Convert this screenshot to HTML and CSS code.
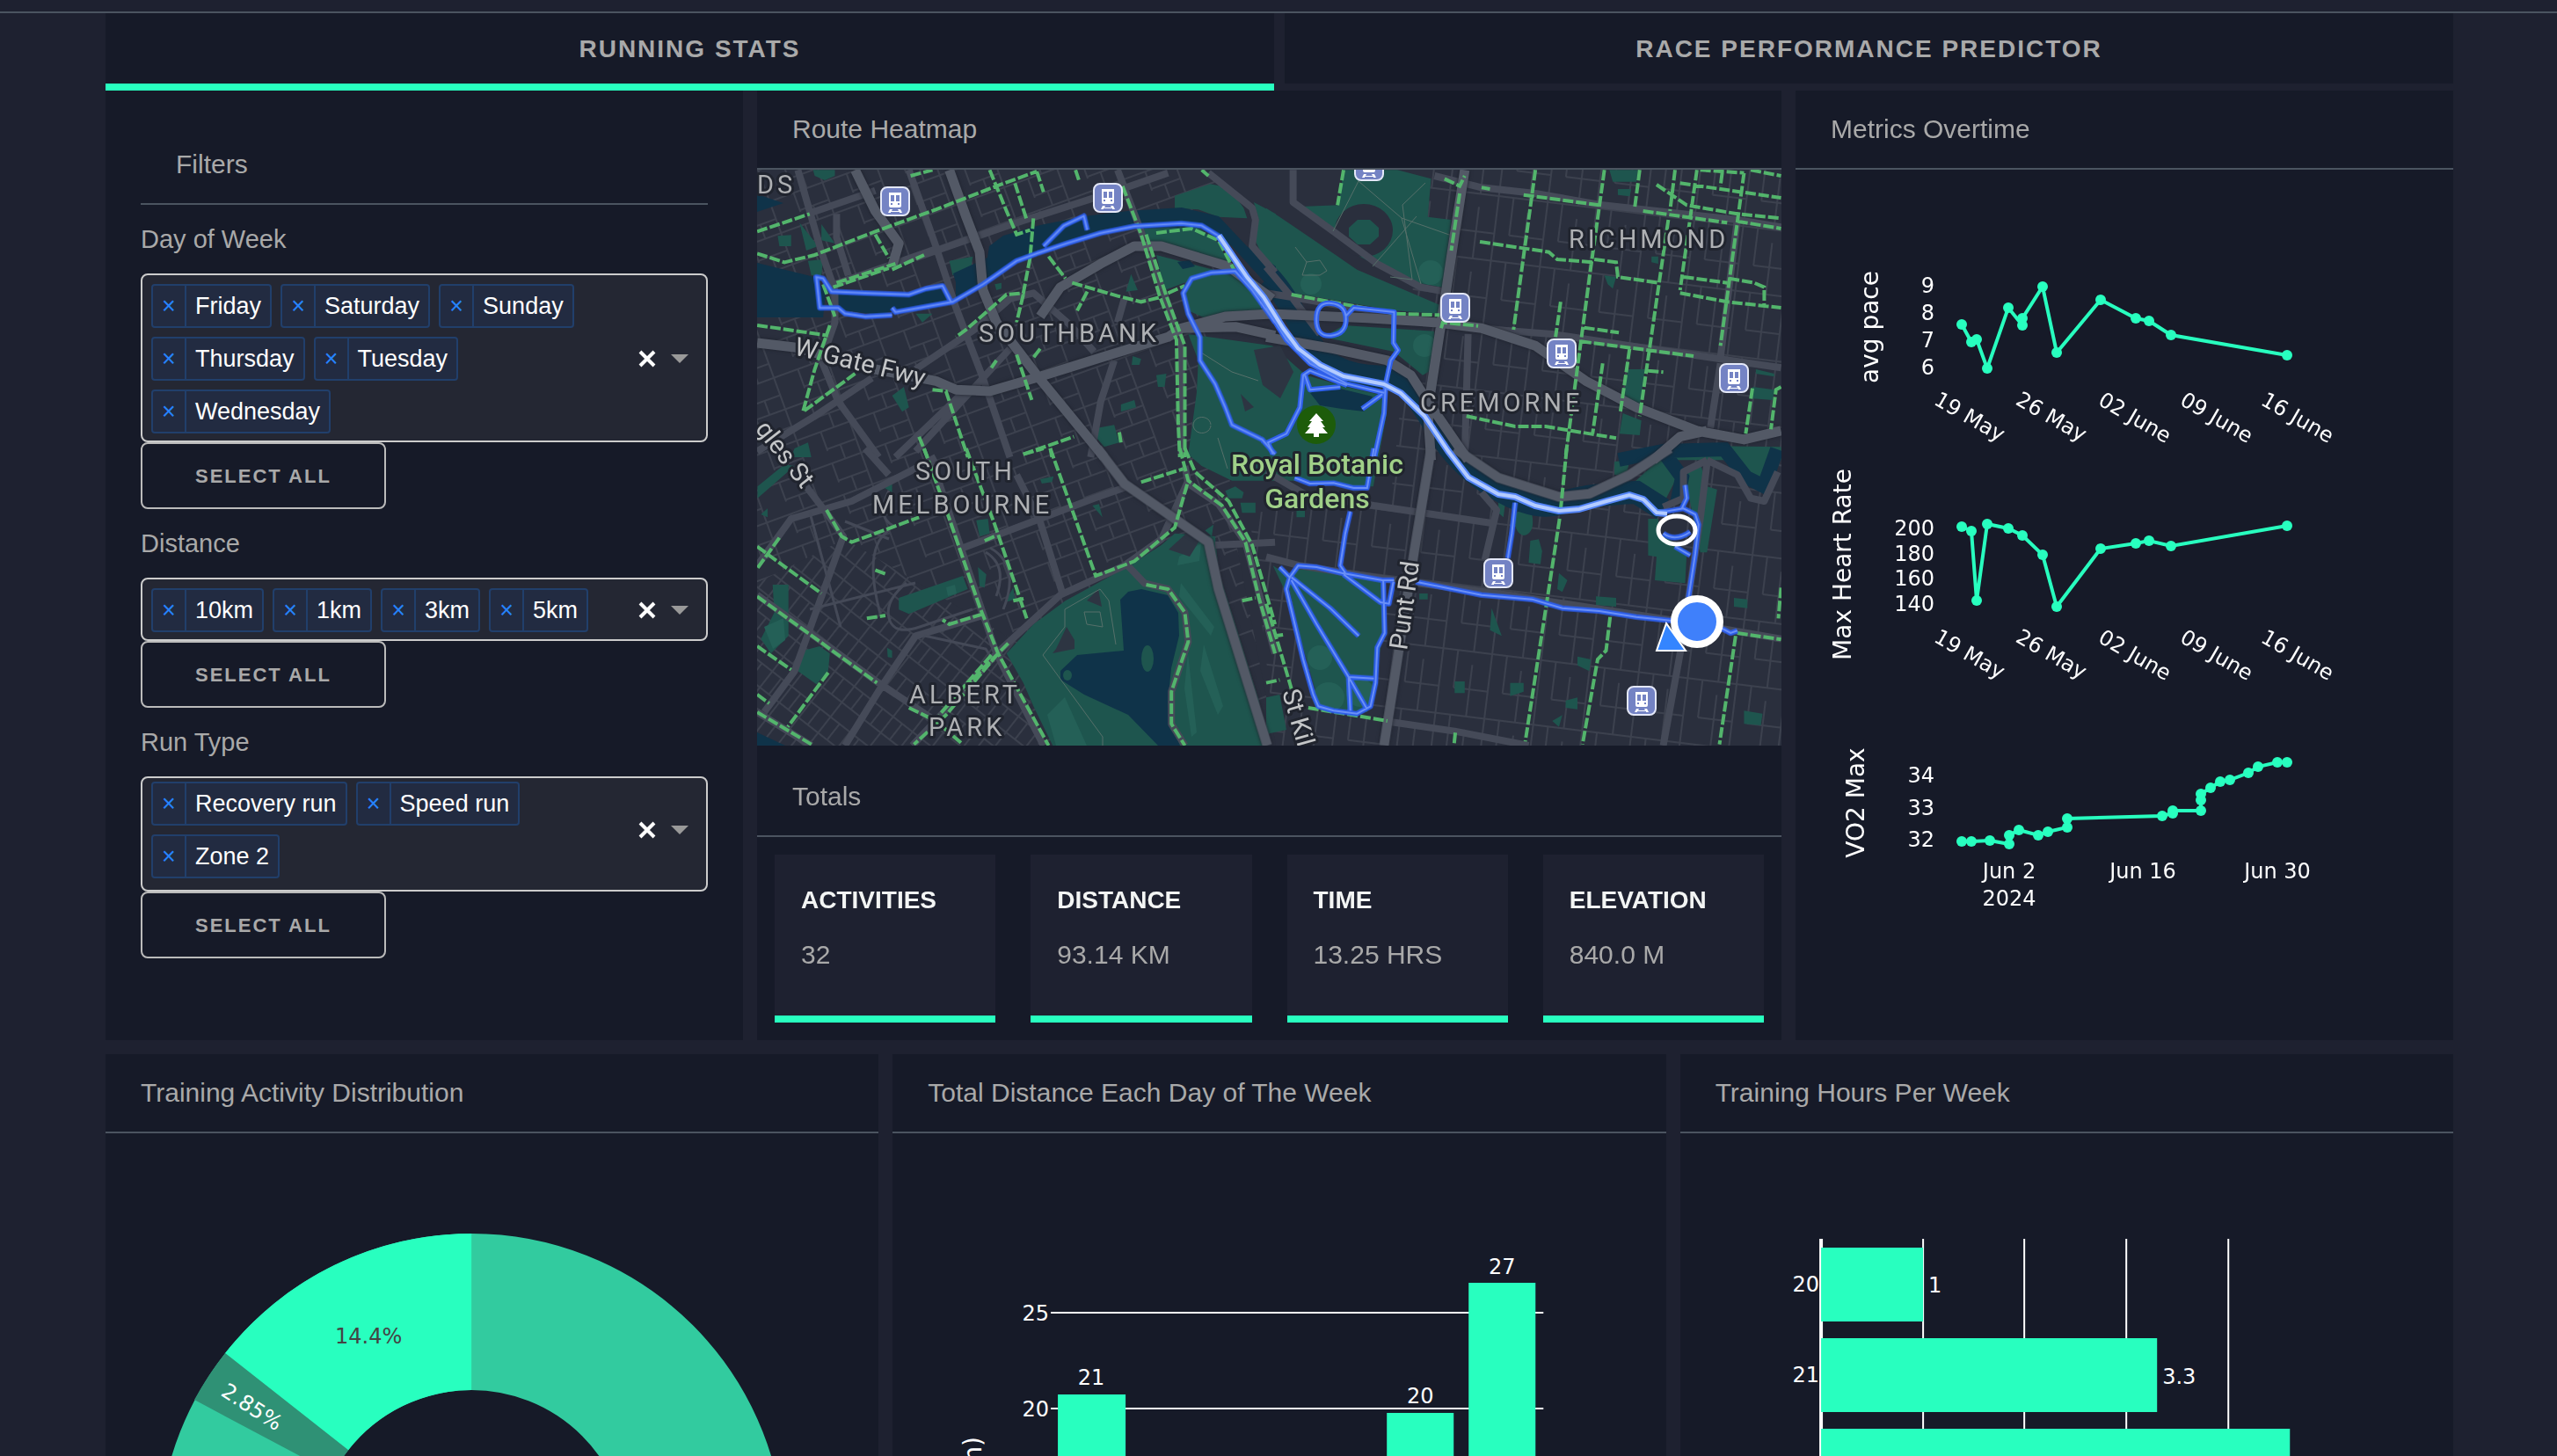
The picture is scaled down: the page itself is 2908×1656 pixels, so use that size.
FILE: index.html
```html
<!DOCTYPE html>
<html lang="en">
<head>
  <meta charset="UTF-8">
  <meta name="viewport" content="width=device-width, initial-scale=1.0">
  <title>Running Dashboard</title>
  <link rel="stylesheet" href="styles.css">
</head>
<body>
  <header class="banner"></header>
  <main class="app">
    <!-- Tabs -->
    <div class="tabs" role="tablist">
      <button class="tab tab-selected" role="tab" aria-selected="true">RUNNING STATS</button>
      <button class="tab" role="tab" aria-selected="false">RACE PERFORMANCE PREDICTOR</button>
    </div>

    <div class="top-row">
      <!-- Filters -->
      <section class="panel filters">
        <h2 class="section-header">Filters</h2>

        <label class="filter-label" for="day-toggle">Day of Week</label>
        <div class="select">
          <div class="chips">
            <span class="chip"><button class="chip-x" aria-label="Remove Friday">×</button><span class="chip-text">Friday</span></span>
            <span class="chip"><button class="chip-x" aria-label="Remove Saturday">×</button><span class="chip-text">Saturday</span></span>
            <span class="chip"><button class="chip-x" aria-label="Remove Sunday">×</button><span class="chip-text">Sunday</span></span>
            <span class="chip"><button class="chip-x" aria-label="Remove Thursday">×</button><span class="chip-text">Thursday</span></span>
            <span class="chip"><button class="chip-x" aria-label="Remove Tuesday">×</button><span class="chip-text">Tuesday</span></span>
            <span class="chip"><button class="chip-x" aria-label="Remove Wednesday">×</button><span class="chip-text">Wednesday</span></span>
          </div>
          <button class="select-clear" aria-label="Clear days">
            <svg width="20" height="20" viewBox="0 0 20 20"><path d="M2 2L18 18M18 2L2 18"/></svg>
          </button>
          <button class="select-toggle" id="day-toggle" aria-label="Open day list">
            <svg width="20" height="10" viewBox="0 0 20 10"><path d="M0 0H20L10 10Z"/></svg>
          </button>
        </div>
        <button class="select-all">SELECT ALL</button>

        <label class="filter-label" for="distance-toggle">Distance</label>
        <div class="select">
          <div class="chips">
            <span class="chip"><button class="chip-x" aria-label="Remove 10km">×</button><span class="chip-text">10km</span></span>
            <span class="chip"><button class="chip-x" aria-label="Remove 1km">×</button><span class="chip-text">1km</span></span>
            <span class="chip"><button class="chip-x" aria-label="Remove 3km">×</button><span class="chip-text">3km</span></span>
            <span class="chip"><button class="chip-x" aria-label="Remove 5km">×</button><span class="chip-text">5km</span></span>
          </div>
          <button class="select-clear" aria-label="Clear distances">
            <svg width="20" height="20" viewBox="0 0 20 20"><path d="M2 2L18 18M18 2L2 18"/></svg>
          </button>
          <button class="select-toggle" id="distance-toggle" aria-label="Open distance list">
            <svg width="20" height="10" viewBox="0 0 20 10"><path d="M0 0H20L10 10Z"/></svg>
          </button>
        </div>
        <button class="select-all">SELECT ALL</button>

        <label class="filter-label" for="type-toggle">Run Type</label>
        <div class="select select-scrolled">
          <div class="chips">
            <span class="chip"><button class="chip-x" aria-label="Remove Recovery run">×</button><span class="chip-text">Recovery run</span></span>
            <span class="chip"><button class="chip-x" aria-label="Remove Speed run">×</button><span class="chip-text">Speed run</span></span>
            <span class="chip"><button class="chip-x" aria-label="Remove Zone 2">×</button><span class="chip-text">Zone 2</span></span>
          </div>
          <button class="select-clear" aria-label="Clear run types">
            <svg width="20" height="20" viewBox="0 0 20 20"><path d="M2 2L18 18M18 2L2 18"/></svg>
          </button>
          <button class="select-toggle" id="type-toggle" aria-label="Open run type list">
            <svg width="20" height="10" viewBox="0 0 20 10"><path d="M0 0H20L10 10Z"/></svg>
          </button>
        </div>
        <button class="select-all">SELECT ALL</button>
      </section>

      <!-- Map and totals -->
      <section class="panel">
        <h2 class="section-header">Route Heatmap</h2>
        <svg class="map" viewBox="0 0 1165 655" role="img" aria-label="Route heatmap">
          <defs>
            <pattern id="grid-west" width="64" height="38" patternUnits="userSpaceOnUse" patternTransform="rotate(-20)">
              <path class="minor" d="M0 1H64M1 0V38M30 0V24M30 22H64M46 22V38"/>
            </pattern>
            <pattern id="grid-park" width="44" height="28" patternUnits="userSpaceOnUse" patternTransform="rotate(-52)">
              <path class="minor" d="M0 1H44M1 0V28M22 14H44M22 0V28"/>
            </pattern>
            <pattern id="grid-east" width="56" height="74" patternUnits="userSpaceOnUse" patternTransform="rotate(7)">
              <path class="minor" d="M0 1H56M1 0V74M18 0V44M36 16V74M18 44H56"/>
            </pattern>
            <symbol id="train" viewBox="0 0 34 34">
              <rect x="1" y="1" width="32" height="32" rx="7" fill="#7483c4" stroke="#e4e8f8" stroke-width="2"/>
              <path fill="#fff" d="M10 7H24V22Q24 24 22 24H12Q10 24 10 22ZM11 26H14L13 28H21L20 26H23L25 30H22V29H12V30H9Z"/>
              <path fill="#7483c4" d="M12 10H16V17H12ZM18 10H22V17H18ZM12 19H14V21H12ZM20 19H22V21H20Z"/>
            </symbol>
          </defs>
          <rect width="1165" height="655" fill="#2a2f3d"/>
          <rect width="700" height="655" fill="url(#grid-west)"/>
          <path d="M0 470L100 420 300 540 320 655H0Z" fill="#2a2f3d"/>
          <path d="M0 470L100 420 300 540 320 655H0Z" fill="url(#grid-park)"/>
          <path d="M520 0H1165V655H590L540 400Z" fill="#2a2f3d"/>
          <path d="M760 0H1165V655H590L560 390 720 380Z" fill="url(#grid-east)"/>

          <!-- parks -->
          <g class="park">
            <g transform="matrix(.3827 0 0 .3333 -11 -13)">
              <path d="M1270 128L1375 88 1430 100 1475 170 1485 205 1400 200 1340 175 1270 170ZM1505 150L1570 190V370L1530 330 1500 260 1520 210ZM1170 240L1340 235 1400 290 1440 380 1390 370 1280 320 1200 290ZM1215 330L1400 385 1310 420 1240 450ZM1300 430L1390 390 1450 400 1560 520 1360 545 1310 520Z"/>
              <path d="M1310 600L1560 640 1660 740 1780 780 1890 810 1900 870 1860 1120 1760 1120 1640 1100 1440 1100 1350 1050 1310 1010 1335 800 1340 690Z"/>
              <path d="M195 40H260V60L230 75 200 60ZM155 220L210 300 175 315ZM90 265L130 262V300H95ZM220 225L260 290 220 280ZM180 350L225 345 220 400 190 400ZM600 350L670 335 665 370 610 400ZM1140 395L1160 450 1125 455ZM430 810L465 780 480 850 460 865ZM1110 840L1150 825 1155 850 1110 865ZM1040 920L1090 910 1105 970 1060 985 1035 950ZM1215 740L1245 735 1240 780H1220ZM1145 675L1170 685 1165 705H1142ZM500 530H550L520 560ZM735 430L755 425 755 445 740 450ZM140 990L180 970 190 1020H130Z"/>
            </g>
            <g transform="matrix(.3827 0 0 .3333 579 -13)">
              <path d="M230 40H390L490 70 480 200 550 210 525 440 470 430 380 400 270 330 100 165 215 160ZM0 170L40 200 270 380 515 500 510 530 380 520 80 460 30 400 0 350ZM230 570L500 590 495 720 465 740 380 660 170 610Z"/>
              <path d="M1020 40H1105L1100 80 1030 80ZM1045 105L1085 105 1080 130 1045 125ZM1005 400L1040 405 1030 445 1015 430ZM1075 720L1125 720 1110 845 1060 830ZM1060 870L1115 895 1110 945 1050 940ZM1455 720L1510 735V745L1455 735ZM1445 780L1510 790 1505 825 1445 820ZM1145 335H1165V360L1145 355ZM1240 980L1530 985V1030H1200Z"/>
            </g>
            <g transform="matrix(.3827 0 0 .3333 -11 317)">
              <path d="M1270 290L1390 300 1400 420 1450 600 1520 860 1545 1020H910L850 880 820 800 770 700 850 600 945 520 1120 410 1230 330Z"/>
              <path d="M75 465H122V640L70 700 40 650 80 560ZM165 690L215 675 245 700 240 760 205 805 150 760ZM450 510L640 435 655 480 480 565 450 550ZM680 245L715 240 720 290 690 300ZM685 405L710 430 705 475 690 470ZM1025 195L1045 190 1055 235ZM765 525L790 475 795 515ZM870 105L910 95 905 115 875 120ZM400 130L430 120V150ZM40 225L60 205V235ZM30 130L110 55 140 60 30 170ZM415 680L430 690V715L417 712ZM1360 280L1385 260 1380 300ZM1420 145L1450 130 1475 150 1470 170H1430ZM1465 185H1510V220H1470Z"/>
            </g>
            <g transform="matrix(.3827 0 0 .3333 579 317)">
              <path d="M90 410L345 450 350 620 320 800 300 900 160 880 100 640 65 460ZM20 400L60 430 70 520ZM740 225Q765 190 790 225Q800 290 765 297Q735 290 740 225ZM690 175L710 190 705 235 690 220ZM785 315L810 310 820 350 815 395 780 390ZM870 425L895 450 880 490 865 480ZM670 545L700 640 665 620ZM980 505L1040 510V540L980 535ZM1135 240H1165L1170 290 1250 350 1245 460 1155 450 1160 370 1135 365ZM1240 70L1290 50 1310 130 1340 140 1310 355H1290Z"/>
              <path d="M925 710L965 720 960 760 925 740ZM725 800H765V830L725 845ZM560 795H590V835H560ZM890 860L925 850V890L890 885ZM850 930L880 910 870 950ZM1390 510L1430 515V545L1390 540ZM1420 895L1475 905 1470 945 1420 940ZM0 850L40 840 60 960 0 975ZM455 495H480V515H455ZM90 210H115V235H90ZM1080 130L1180 25 1220 100 1180 190 1140 160ZM1330 0H1530L1480 100 1440 120 1400 40ZM1035 45L1080 40 1070 95 1035 90Z"/>
            </g>
          </g>
          <g class="park-light">
            <circle cx="766" cy="117" r="14"/><circle cx="759" cy="200" r="13"/><circle cx="630" cy="130" r="12"/>
            <ellipse cx="650" cy="600" rx="18" ry="17"/><ellipse cx="686" cy="595" rx="16" ry="16"/><ellipse cx="640" cy="555" rx="14" ry="14"/>
            <path d="M330 620L350 600 375 655H340ZM480 440L505 425 503 445 478 450ZM482 470L520 520 516 530 480 485ZM508 540L530 610 524 620 504 570ZM490 550L500 640 494 645 486 590ZM215 475L225 472 227 482 217 485ZM8 520L30 510 32 535 18 545Z"/>
          </g>

          <!-- stadium and dark clearings -->
          <ellipse cx="690" cy="69" rx="33" ry="30" fill="#2a2f3d"/>
          <path class="park" d="M683 57H697L707 66V76L697 85H683L673 76V66Z"/>
          <path d="M565 205L595 200 610 230 595 260 575 245ZM550 255L565 270 555 275ZM340 545L352 520 361 535 361 545 336 550ZM468 432L490 412 503 422 492 440ZM375 490L388 477 392 497Z" fill="#2d3542"/>

          <!-- water -->
          <g class="water">
            <path d="M0 106L65 122 78 140 75 168 0 168ZM86 139L120 141 170 143 206 133 220 150 205 157 155 160 140 165 96 160ZM0 640L32 655H0ZM0 28L30 38 0 48Z"/>
            <path d="M226 128L223 118 262 100 264 87 280 75 322 63 372 53 422 47 483 43 525 53 557 87 590 110V142L540 87 502 65 430 67 372 75 318 97 287 110 226 150Z"/>
            <path d="M413 489L422 480 437 477 467 484 479 504 480 530 471 567 467 607 471 630 481 655H456L422 620 372 597 345 580V570L364 552 417 547Z"/>
            <path d="M629 254L650 246 700 258 690 275 665 272 640 268ZM478 105L492 103 498 110 484 113Z"/>
            <path class="river" d="M582 122Q600 140 625 190T720 235Q745 245 770 290T840 362T915 379T1000 367L1030 386"/>
            <path class="river thin" d="M980 330L1030 320 1052 350 1046 380M1030 320L1100 318 1125 350 1145 360 1160 318"/>
          </g>
          <ellipse class="park" cx="444" cy="556" rx="7" ry="15"/>
          <ellipse class="park" cx="353" cy="575" rx="5" ry="6"/>

          <!-- secondary roads -->
          <g class="road">
            <g transform="matrix(.3827 0 0 .3333 -11 -13)">
              <path d="M150 40L220 320 260 450V560L220 690 270 830 390 1020M480 40L560 300 620 510 700 750 780 1020M180 190L380 110M500 340L800 220 1100 110 1250 50M260 430L560 310M500 720L680 580 780 480 850 460 960 570 1030 660M29 1000L200 880 370 750M640 800L440 1020M1370 50L1500 170 1510 210 1500 300 1568 390M1090 690L1050 830 1020 1020M780 650L500 1000M1100 40L1170 250 1250 500 1290 650V1020M265 190L265 270 300 400M1100 560L1120 480"/>
            </g>
            <g transform="matrix(.3827 0 0 .3333 579 -13)">
              <path d="M0 370L80 480 160 600M80 40V150L200 250 330 360 460 440 530 455M500 60L640 100 800 120 1000 160 1400 210 1530 235M620 580L850 600 1140 650 1530 715M1350 700L1320 920M600 600L590 1020M1400 210L1350 680M0 460L80 475 520 560"/>
            </g>
            <g transform="matrix(.3827 0 0 .3333 -11 317)">
              <path d="M29 400L130 240 310 180 480 80 560 30M350 0L420 90M175 130L235 220 285 300 140 760 50 900M550 50L740 700 880 1014M640 340L870 240 1030 170 1130 130M800 90L870 250 935 490M740 700L930 500 1120 400 1230 310 1310 110M740 700L600 880 490 1014M700 570L500 640 400 810 290 1014M29 500L390 800 560 930M29 900L190 1014M1130 400L1180 460 1250 480 1300 560 1310 660 1260 830V940L1300 1014M1300 60L1310 120 1400 190 1480 320 1568 700M1390 330L1568 320"/>
            </g>
            <g transform="matrix(.3827 0 0 .3333 579 317)">
              <path d="M0 370L100 400 380 450 720 500 1000 550 1230 590 1530 650M350 930L560 965 780 1014M320 195L670 255M640 150L685 210 650 380M1310 50L1290 240 1230 700 1180 1014M1310 40L1400 90 1440 170 1480 180 1520 80M1180 200L1240 170V80L1310 40M0 80L120 160 320 195"/>
            </g>
          </g>
          <g class="street">
            <path d="M150 365Q135 395 155 405M170 470Q145 490 150 510T185 520L245 500M140 505Q120 430 150 410M260 435Q285 450 272 485M265 430Q300 450 280 500M60 390L95 520M190 530L260 545 270 560M60 500L180 470M100 400L150 420"/>
            <path class="trail" d="M684 13L655 70M684 13L733 55 790 75M760 15L734 40 745 125 720 122M733 55L755 130M750 53L700 110M612 88L625 105 640 103 648 115 640 120 620 120 625 105M350 500L390 477 400 490M350 500V520L325 552 393 645V655M372 503H390L393 520 375 517ZM400 490L408 540M506 290m10 0a10 9 0 1 0 0 1M524 305L535 340M505 208L540 230 570 240"/>
          </g>

          <!-- freeways -->
          <g class="freeway">
            <g transform="matrix(.3827 0 0 .3333 -11 -13)">
              <path d="M29 630L140 645 380 720 560 760 620 790 720 795 870 745 1050 680 1250 610 1290 580 1420 540 1568 530M1290 580L1450 575 1568 605M320 40L380 180 450 290 430 370M600 40L650 200 690 320 700 450 740 560 860 740 1060 1020M870 540L930 440 1050 360 1150 300 1230 300 1430 370 1560 480"/>
            </g>
            <g transform="matrix(.3827 0 0 .3333 579 -13)">
              <path d="M0 530L300 545 500 560 640 580 800 640 950 760 1100 850 1280 930 1420 960 1530 930M1150 1030L1230 950 1310 930M0 610L200 650 360 690 430 740 480 830 600 1030M590 40L560 260 535 450 515 600 480 860 490 1030"/>
            </g>
            <g transform="matrix(.3827 0 0 .3333 -11 317)">
              <path d="M1040 0L1120 120 1270 240 1370 320 1400 480 1545 1014"/>
            </g>
            <g transform="matrix(.3827 0 0 .3333 579 317)">
              <path d="M490 0L440 350 350 1014M560 0L690 100 870 165 960 155 1080 90 1200 0"/>
            </g>
          </g>

          <!-- bike paths -->
          <g class="bike">
            <g transform="matrix(.3827 0 0 .3333 -11 -13)">
              <path d="M29 325L110 355 200 330 380 250 560 175 740 95 860 45M29 250L185 190M720 40L770 180 800 260 840 245M850 205L840 340 820 460 770 465 650 585 620 610M820 465L800 560M255 440L420 375M430 380L525 330M265 425L440 360M380 260L420 340M485 60L550 40M795 85L830 210M860 45L880 115M975 40L985 75M1115 95L1170 260 1225 470 1275 620 1280 900 1285 1020M1185 260L1245 470 1300 640V1020M895 335L945 410M965 425L1100 470 1170 490 1225 475M1010 455L980 520M225 430L260 540M29 570L240 605M245 570L200 720 165 865 320 735M550 790L590 795 655 1020M800 670L845 825M740 690L725 715M870 650L850 680M510 950L535 1020M820 1010L970 950M900 990L905 1020M1105 935L1110 970M1215 255L1320 240 1400 280 1455 400M1250 460L1300 435M1350 40L1370 60"/>
            </g>
            <g transform="matrix(.3827 0 0 .3333 579 -13)">
              <path d="M800 40L735 585M1005 40L965 370 890 1015M1110 40L1095 170M1215 40L1200 180M1195 210L1110 880M1280 40L1230 450M1420 50L1350 640M575 120L550 315M530 70L575 95 590 60M640 100L665 105M765 125L990 160M1120 180L1370 220M1400 215L1530 240M1160 90L1250 160 1400 190 1530 205M1230 85L1530 135M1440 40L1530 60M1290 40L1420 50M1355 50L1350 95M635 285L840 320 865 345 970 355M975 345L1040 355 1045 405 1165 425M1240 405L1370 425M1375 410L1450 425 1480 440V500M1230 460L1370 490 1530 510M875 490L860 610M945 578L1048 595M935 625L1270 675M1080 650L1052 870M1000 700L970 940M1135 725L1180 730M595 880L740 915 830 915 1040 955M75 465L240 500 385 530 515 535M230 40L212 160M520 580L525 560 630 572M1445 785L1425 940M1530 780L1515 790 1500 925"/>
            </g>
            <g transform="matrix(.3827 0 0 .3333 -11 317)">
              <path d="M525 0L600 240 690 540 745 700 895 1014M650 0L735 260 830 580M900 0L1035 435 1150 385 1270 270 1310 110M1285 0L1310 110 1410 195 1480 320 1520 510 1568 700M1300 0L1330 80 1430 180 1500 330 1568 600M235 210L280 300 310 320 510 235M95 305L29 410M29 335L220 495M29 505L385 800M29 675L130 755M29 840L65 870M29 900L190 1010M240 765L120 950M480 885L560 930 640 1010M775 665L650 810M745 700L590 910 495 1010M725 705L570 910M700 565L600 600 580 585M1185 465L1250 480 1300 560 1310 660 1260 830V940L1300 1014M1170 115L1295 70M820 20L880 0M355 580L410 570M380 415L415 430M1470 520L1510 510M790 520L825 512M705 315L735 300"/>
            </g>
            <g transform="matrix(.3827 0 0 .3333 579 317)">
              <path d="M893 0L875 210M872 240L770 1000M1022 575L1010 690 985 720 940 1010M1395 640L1347 1010M1400 630L1530 652M1530 475L1522 580M125 885L360 930M562 970L558 1014M0 530L75 820M25 640L50 636M0 800L40 790"/>
            </g>
          </g>

          <!-- recorded runs -->
          <g class="run">
            <g transform="matrix(.3827 0 0 .3333 -11 -13)">
              <path id="run-nw" d="M430 535L350 540 290 530 270 510H215L205 405 225 410 250 455 350 460 480 465 530 445 580 435 605 490M430 510L440 525 610 490 700 430 800 350 860 325 950 290 1050 255 1150 232 1290 222 1350 230 1400 265 1440 330 1480 410M880 300L940 230 1000 197 1010 245M1568 560L1500 450 1450 385 1380 390 1320 410 1295 460 1310 530 1345 610V690L1390 770 1420 850 1440 910 1530 960 1568 1010"/>
            </g>
            <g transform="matrix(.3827 0 0 .3333 579 -13)">
              <path id="run-ne" d="M0 510L60 620 130 700 240 770 350 800M193 495Q237 500 237 550T193 605 149 550 193 495M235 540L260 510 380 525 378 630 392 655 370 690 355 770 350 870 320 1030M20 1010L5 970 60 940 100 850 110 740 130 725 240 775M115 740L130 790 220 780M285 855L345 805"/>
            </g>
            <g transform="matrix(.3827 0 0 .3333 579 317)">
              <path id="run-se" d="M1245 125L1250 170 1235 205M1160 220L1240 205 1275 225 1285 260 1275 360 1255 510M740 185L730 290 718 375M85 100L130 120 200 118 260 135 300 135 320 0M250 215L235 290 220 400 235 425M230 430L340 525 365 530 378 455M40 405L70 440 95 400 150 405 225 425 345 450 380 450M70 440L60 480 85 600 110 720 140 840 155 880 200 895 270 905 310 880 325 800 330 680 352 630 348 450M75 440L190 545 275 640M75 450L150 600 245 780 300 890M245 780L320 785M245 780L250 895M445 455L530 475 640 500 790 515 880 545 990 555 1100 575 1205 588M1355 615L1380 630 1400 622M1215 335L1260 365M1180 290Q1215 320 1260 285"/>
            </g>
          </g>
          <g class="run-core">
            <g transform="matrix(.3827 0 0 .3333 -11 -13)"><use href="#run-nw"/></g>
            <g transform="matrix(.3827 0 0 .3333 579 -13)"><use href="#run-ne"/></g>
            <g transform="matrix(.3827 0 0 .3333 579 317)"><use href="#run-se"/></g>
          </g>
          <g class="hot">
            <path id="hot-path" d="M525 75L540 97 557 122 576 145 598 180 615 203 640 222 667 235 713 244 732 254 759 280 786 320 809 350 843 369 862 372 885 382 912 388 935 386 966 377 992 370 1008 375 1023 390 1035 391"/>
          </g>
          <use class="hot-core" href="#hot-path"/>
          <ellipse cx="1046" cy="410" rx="21" ry="16" fill="none" stroke="#fff" stroke-width="5"/>

          <!-- pins -->
          <path d="M1034 516L1023 547H1056Z" fill="#3485ff" stroke="#fff" stroke-width="2"/>
          <circle cx="1069" cy="514" r="26" fill="#3f80fb" stroke="#fff" stroke-width="8"/>
          <use href="#train" x="140" y="19" width="34" height="34"/>
          <use href="#train" x="382" y="15" width="34" height="34"/>
          <use href="#train" x="679" y="-21" width="34" height="34"/>
          <use href="#train" x="777" y="140" width="34" height="34"/>
          <use href="#train" x="898" y="192" width="34" height="34"/>
          <use href="#train" x="1094" y="220" width="34" height="34"/>
          <use href="#train" x="826" y="442" width="34" height="34"/>
          <use href="#train" x="989" y="587" width="34" height="34"/>
          <circle cx="636" cy="290" r="22" fill="#1d5c0a"/>
          <path fill="#fff" d="M636 277L644 286H641L646 293H643L649 300H639V304H633V300H623L629 293H626L631 286H628Z"/>

          <g class="suburb">
            <text x="0" y="27">DS</text>
            <text x="252" y="196">SOUTHBANK</text>
            <text x="923" y="89">RICHMOND</text>
            <text x="754" y="275">CREMORNE</text>
            <text x="180" y="353">SOUTH</text>
            <text x="131" y="391">MELBOURNE</text>
            <text x="173" y="607">ALBERT</text>
            <text x="195" y="644">PARK</text>
          </g>
          <g class="road-name">
            <text transform="translate(41 210) rotate(14)">W Gate Fwy</text>
            <text transform="translate(739 547) rotate(-82)">Punt Rd</text>
            <text transform="translate(597 594) rotate(74)">St Kilda Rd</text>
            <text transform="translate(51 364) rotate(52)" text-anchor="end">gles St</text>
          </g>
          <g class="garden">
            <text x="637" y="346">Royal Botanic</text>
            <text x="637" y="385">Gardens</text>
          </g>
        </svg>

        <h2 class="section-header totals-header">Totals</h2>
        <div class="totals">
          <div class="total-card"><h3>ACTIVITIES</h3><p>32</p></div>
          <div class="total-card"><h3>DISTANCE</h3><p>93.14 KM</p></div>
          <div class="total-card"><h3>TIME</h3><p>13.25 HRS</p></div>
          <div class="total-card"><h3>ELEVATION</h3><p>840.0 M</p></div>
        </div>
      </section>

      <!-- Metrics -->
      <section class="panel">
        <h2 class="section-header">Metrics Overtime</h2>
        <svg class="chart" viewBox="0 0 748 990" role="img" aria-label="Metrics over time">
          <defs>
            <marker id="dot" markerUnits="userSpaceOnUse" markerWidth="12" markerHeight="12" refX="6" refY="6">
              <circle cx="6" cy="6" r="6" fill="#28ffbf"/>
            </marker>
          </defs>
          <g class="axis-title">
            <text transform="translate(94 179) rotate(-90)">avg pace</text>
            <text transform="translate(63 449) rotate(-90)">Max Heart Rate</text>
            <text transform="translate(78 720) rotate(-90)">VO2 Max</text>
          </g>
          <g class="tick-right">
            <text x="158" y="140">9</text><text x="158" y="171">8</text><text x="158" y="202">7</text><text x="158" y="233">6</text>
            <text x="158" y="416">200</text><text x="158" y="445">180</text><text x="158" y="473">160</text><text x="158" y="502">140</text>
            <text x="158" y="697">34</text><text x="158" y="734">33</text><text x="158" y="770">32</text>
          </g>
          <g class="tick-mid">
            <text transform="translate(194 288) rotate(30)">19 May</text>
            <text transform="translate(287 288) rotate(30)">26 May</text>
            <text transform="translate(382 289) rotate(30)">02 June</text>
            <text transform="translate(475 289) rotate(30)">09 June</text>
            <text transform="translate(567 289) rotate(30)">16 June</text>
            <text transform="translate(194 558) rotate(30)">19 May</text>
            <text transform="translate(287 558) rotate(30)">26 May</text>
            <text transform="translate(382 559) rotate(30)">02 June</text>
            <text transform="translate(475 559) rotate(30)">09 June</text>
            <text transform="translate(567 559) rotate(30)">16 June</text>
            <text x="243" y="806">Jun 2</text><text x="243" y="837">2024</text>
            <text x="395" y="806">Jun 16</text><text x="548" y="806">Jun 30</text>
          </g>
          <polyline class="series" points="189,176 200,196 206,193 218,226 242,157 258,177 258,169 281,133 297,208 347,148 387,169 402,172 427,188 559,211"/>
          <polyline class="series" points="189,406 200,411 206,490 218,403 242,408 258,416 281,438 297,497 347,431 387,425 402,422 427,428 559,405"/>
          <polyline class="series" points="189,764 200,764 221,763 243,767 243,757 254,751 276,757 287,753 309,748 309,738 417,735 429,732 429,729 461,729 461,717 461,710 472,703 483,696 494,694 515,686 526,679 548,674 559,674"/>
        </svg>
      </section>
    </div>

    <div class="bottom-row">
      <section class="panel">
        <h2 class="section-header">Training Activity Distribution</h2>
        <svg class="chart" viewBox="0 0 879 900" role="img" aria-label="Training activity distribution">
          <circle cx="416" cy="470" r="267" fill="none" stroke="#32cb9f" stroke-width="178"/>
          <path d="M416 114A356 356 0 0 0 136 250L276 360A178 178 0 0 1 416 292Z" fill="#28ffbf"/>
          <path d="M136 250A356 356 0 0 0 101 303L259 387A178 178 0 0 1 276 360Z" fill="#2f9175"/>
          <g class="tick-mid">
            <text class="dark" x="299" y="239">14.4%</text>
            <text transform="translate(162 318) rotate(33)">2.85%</text>
          </g>
        </svg>
      </section>

      <section class="panel">
        <h2 class="section-header">Total Distance Each Day of The Week</h2>
        <svg class="chart" viewBox="0 0 879 900" role="img" aria-label="Total distance each day of the week">
          <path class="gridline" d="M180 204H740M180 313H740M180 422H740"/>
          <path class="bar" d="M188 297H265V860H188ZM562 318H638V860H562ZM655 170H731V860H655Z"/>
          <g class="tick-right"><text x="178" y="213">25</text><text x="178" y="322">20</text></g>
          <g class="tick-mid"><text x="226" y="286">21</text><text x="600" y="307">20</text><text x="693" y="160">27</text></g>
          <text class="axis-title-end" transform="translate(101 345) rotate(-90)">Distance (km)</text>
        </svg>
      </section>

      <section class="panel">
        <h2 class="section-header">Training Hours Per Week</h2>
        <svg class="chart" viewBox="0 0 879 900" role="img" aria-label="Training hours per week">
          <path class="gridline" d="M276 120V860M391 120V860M507 120V860M623 120V860"/>
          <path class="zeroline" d="M160 120V860"/>
          <path class="bar" d="M160 130H276V214H160ZM160 233H542V317H160ZM160 336H693V420H160Z"/>
          <g class="tick-right"><text x="158" y="180">20</text><text x="158" y="283">21</text></g>
          <g class="tick"><text x="282" y="181">1</text><text x="548" y="285">3.3</text></g>
        </svg>
      </section>
    </div>
  </main>
</body>
</html>
```

FILE: styles.css
```css
* {
  box-sizing: border-box;
}
body {
  margin: 0;
  height: 100vh;
  overflow: hidden;
  background: #1e2130;
  color: #a9a9a9;
  font-family: "Liberation Sans", Arial, sans-serif;
}
button {
  font-family: inherit;
  cursor: pointer;
}
.banner {
  height: 15px;
  border-bottom: 2px solid #4b5460;
}
.app {
  padding: 0 118px 0 120px;
}
/* Tabs */
.tabs {
  display: grid;
  grid-template-columns: 1fr 1fr;
  gap: 12px;
}
.tab {
  height: 88px;
  padding: 2px 0 0;
  border: none;
  border-bottom: 8px solid #1e2130;
  background: #161a28;
  color: #a9a9a9;
  font-size: 28px;
  font-weight: bold;
  letter-spacing: 2px;
}
.tab-selected {
  border-bottom-color: #28ffbf;
}
/* Panels */
.top-row {
  display: grid;
  grid-template-columns: 725fr 1165fr 748fr;
  gap: 16px;
}
.bottom-row {
  display: grid;
  grid-template-columns: 1fr 1fr 1fr;
  gap: 16px;
  margin-top: 16px;
}
.panel {
  min-width: 0;
  background: #161a28;
}
.section-header {
  height: 90px;
  margin: 0;
  padding: 0 40px;
  border-bottom: 2px solid #4b5460;
  font-size: 30px;
  font-weight: normal;
  line-height: 88px;
}
/* Filters */
.filters {
  padding: 40px;
}
.filter-label {
  display: block;
  font-size: 29px;
  line-height: 78px;
}
.select {
  display: flex;
  align-items: center;
  padding: 10px 20px 8px 10px;
  border: 2px solid #ccc;
  border-radius: 8px;
  background: #242733;
}
.select-scrolled {
  padding-top: 4px;
  padding-bottom: 13px;
}
.chips {
  display: flex;
  flex: 1;
  flex-wrap: wrap;
  gap: 10px;
}
.chip {
  display: flex;
  height: 50px;
  border: 2px solid #213f6b;
  border-radius: 4px;
  background: #222b41;
  color: #fff;
  font-size: 27px;
  line-height: 46px;
}
.chip-x {
  width: 38px;
  padding: 0;
  border: none;
  border-right: 2px solid #213f6b;
  background: none;
  color: #2684ff;
  font-size: 27px;
}
.chip-text {
  padding: 0 10px;
}
.select-clear,
.select-toggle {
  display: flex;
  padding: 0;
  border: none;
  background: none;
}
.select-clear {
  margin-right: 17px;
  stroke: #fff;
  stroke-width: 4;
}
.select-toggle {
  fill: #999;
}
.select-all {
  display: block;
  height: 76px;
  padding: 2px 60px 0;
  border: 2px solid #bbb;
  border-radius: 8px;
  background: none;
  color: #a9a9a9;
  font-size: 22px;
  font-weight: bold;
  letter-spacing: 2px;
}
/* Totals */
.totals-header {
  margin-top: 14px;
}
.totals {
  display: grid;
  grid-template-columns: repeat(4, 1fr);
  gap: 40px;
  padding: 20px;
}
.total-card {
  padding: 21px 30px 38px;
  border-bottom: 8px solid #28ffbf;
  background: #1e2130;
}
.total-card h3,
.total-card p {
  margin: 0;
  line-height: 62px;
}
.total-card h3 {
  color: #f3f5f4;
  font-size: 28px;
}
.total-card p {
  font-size: 30px;
}
/* Map */
.map,
.chart {
  display: block;
  width: 100%;
  height: auto;
}
.map {
  overflow: hidden;
}
.map path {
  vector-effect: non-scaling-stroke;
}
.park {
  fill: #1e554e;
}
.park-light {
  fill: #246057;
}
.water {
  fill: #0f3349;
}
.river {
  fill: none;
  stroke: #0f3349;
  stroke-width: 26;
}
.river.thin {
  stroke-width: 16;
}
.minor {
  fill: none;
  stroke: #3c414e;
  stroke-width: 2;
}
.street {
  fill: none;
  stroke: #444957;
  stroke-width: 3;
}
.trail {
  stroke: #56706a;
  stroke-width: 1;
}
.road {
  fill: none;
  stroke: #454a58;
  stroke-width: 8;
  stroke-linejoin: round;
}
.freeway {
  fill: none;
  stroke: #535966;
  stroke-width: 11;
  stroke-linejoin: round;
  filter: drop-shadow(0 0 2px #1c202b);
}
.bike {
  fill: none;
  stroke: #53b56c;
  stroke-width: 4;
  stroke-dasharray: 12 3;
}
.run {
  fill: none;
  stroke: #2d5eea;
  stroke-width: 6;
  stroke-linejoin: round;
}
.run-core {
  fill: none;
  stroke: #6a90f7;
  stroke-width: 2;
}
.hot {
  fill: none;
  stroke: #5384f7;
  stroke-width: 8;
  stroke-linejoin: round;
}
.hot-core {
  fill: none;
  stroke: #b4ccff;
  stroke-width: 4;
}
.suburb,
.road-name,
.garden {
  font-family: Roboto, sans-serif;
  font-size: 29px;
  fill: #aeb0b3;
  stroke: #20242e;
  stroke-width: 6;
  stroke-linejoin: round;
  paint-order: stroke;
}
.suburb {
  letter-spacing: 4px;
}
.road-name {
  fill: #c4c6c8;
}
.garden {
  fill: #a0d088;
  font-size: 32px;
  font-weight: 500;
  text-anchor: middle;
}
/* Charts */
.chart {
  fill: #fff;
  font-family: "DejaVu Sans", Verdana, sans-serif;
  font-size: 24px;
}
.axis-title {
  font-size: 28px;
  text-anchor: middle;
}
.axis-title-end {
  font-size: 28px;
  text-anchor: end;
}
.tick-right {
  text-anchor: end;
}
.tick-mid {
  text-anchor: middle;
}
.dark {
  fill: #444;
}
.series {
  fill: none;
  stroke: #28ffbf;
  stroke-width: 4;
  marker: url(#dot);
}
.bar {
  fill: #28ffbf;
}
.gridline {
  stroke: #fff;
  stroke-width: 2;
}
.zeroline {
  stroke: #fff;
  stroke-width: 4;
}
```
